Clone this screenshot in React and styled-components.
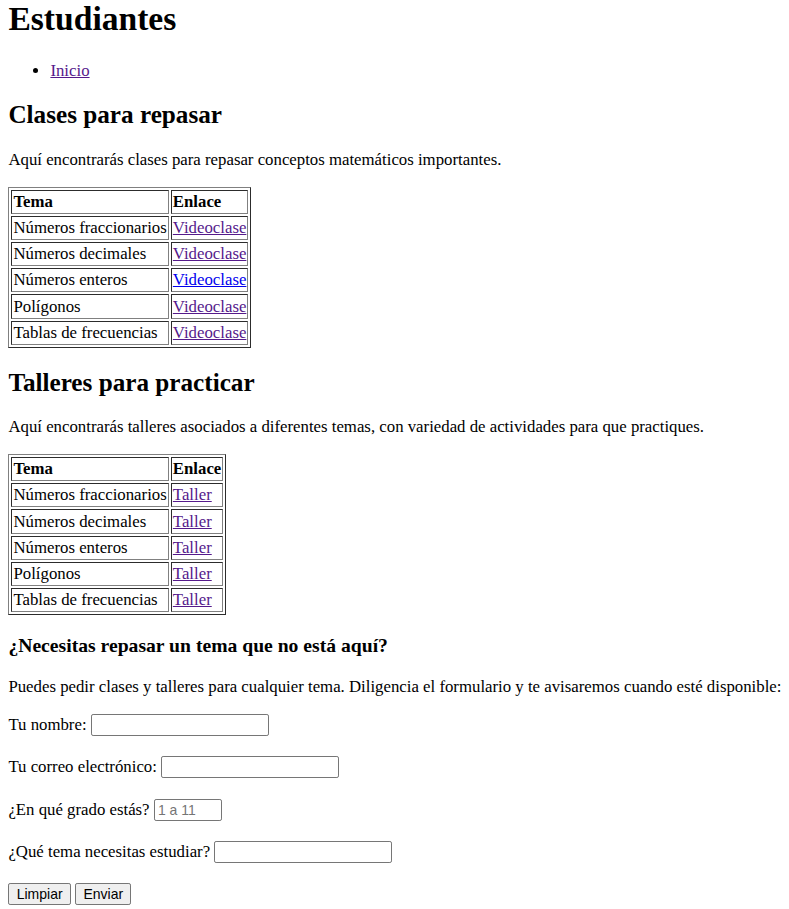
import React from 'react';
import styled, { createGlobalStyle } from 'styled-components';

// the reference page was captured at a 105% zoom level
const GlobalStyle = createGlobalStyle`
  html {
    zoom: 1.05;
  }
  body {
    margin: 0 8px 8px;
    font-family: "Liberation Serif", "Times New Roman", serif;
    font-size: 16px;
    color: #000;
    background: #fff;
  }
`;

const Title = styled.h1`
  font-size: 32px;
  font-weight: bold;
  margin: 0 0 21.44px;
`;

const Nav = styled.ul`
  margin: 16px 0;
  padding-left: 40px;
`;

const SectionTitle = styled.h2`
  font-size: 24px;
  font-weight: bold;
  margin: 19.92px 0;
`;

const SubTitle = styled.h3`
  font-size: 18.72px;
  font-weight: bold;
  margin: 18.72px 0;
`;

const Text = styled.p`
  margin: 16px 0;
  white-space: ${({ $nowrap }) => ($nowrap ? 'nowrap' : 'normal')};
`;

const Link = styled.a`
  color: ${({ $visited }) => ($visited ? '#551a8b' : '#0000ee')};
  text-decoration: underline;
  cursor: pointer;
`;

const Table = styled.table`
  border: 1px outset #808080;
  border-spacing: 2px;
  border-collapse: separate;
`;

const HeadCell = styled.th`
  border: 1px inset #808080;
  padding: 1px;
  text-align: left;
  font-weight: bold;
`;

const Cell = styled.td`
  border: 1px inset #808080;
  padding: 1px;
`;

const Form = styled.form`
  margin: 0;
`;

const Field = styled.p`
  margin: 16px 0;
  min-height: 24.3px;
`;

const Input = styled.input`
  box-sizing: border-box;
  font-family: "Liberation Sans", Arial, sans-serif;
  font-size: 13.33px;
  height: 21px;
  padding: 2px 3px;
  border: 1px solid #767676;
  border-radius: 2px;
  width: ${({ $w }) => $w || '169.5px'};
  &::placeholder {
    color: #757575;
  }
`;

const Button = styled.button`
  box-sizing: border-box;
  font-family: "Liberation Sans", Arial, sans-serif;
  font-size: 13.33px;
  height: 21.3px;
  padding: 2px 7px;
  border: 1px solid #767676;
  border-radius: 2px;
  background: #efefef;
  color: #000;
`;

const temas = [
  ['Números fraccionarios', true],
  ['Números decimales', true],
  ['Números enteros', false],
  ['Polígonos', true],
  ['Tablas de frecuencias', true],
];

function TopicTable({ label, allVisited }) {
  return (
    <Table>
      <tbody>
        <tr>
          <HeadCell>Tema</HeadCell>
          <HeadCell>Enlace</HeadCell>
        </tr>
        {temas.map(([tema, visited]) => (
          <tr key={tema}>
            <Cell>{tema}</Cell>
            <Cell>
              <Link $visited={allVisited || visited}>{label}</Link>
            </Cell>
          </tr>
        ))}
      </tbody>
    </Table>
  );
}

export default function App() {
  return (
    <>
      <GlobalStyle />
      <Title>Estudiantes</Title>
      <Nav>
        <li>
          <Link $visited>Inicio</Link>
        </li>
      </Nav>
      <SectionTitle>Clases para repasar</SectionTitle>
      <Text>Aquí encontrarás clases para repasar conceptos matemáticos importantes.</Text>
      <TopicTable label="Videoclase" />
      <SectionTitle>Talleres para practicar</SectionTitle>
      <Text>
        Aquí encontrarás talleres asociados a diferentes temas, con variedad de actividades para que
        practiques.
      </Text>
      <TopicTable label="Taller" allVisited />
      <SubTitle>¿Necesitas repasar un tema que no está aquí?</SubTitle>
      <Text $nowrap>
        Puedes pedir clases y talleres para cualquier tema. Diligencia el formulario y te avisaremos
        cuando esté disponible:
      </Text>
      <Form onSubmit={(e) => e.preventDefault()}>
        <Field>
          Tu nombre: <Input type="text" />
        </Field>
        <Field>
          Tu correo electrónico: <Input type="email" />
        </Field>
        <Field>
          ¿En qué grado estás? <Input type="number" placeholder="1 a 11" $w="65px" />
        </Field>
        <Field>
          ¿Qué tema necesitas estudiar? <Input type="text" />
        </Field>
        <Field>
          <Button type="reset">Limpiar</Button> <Button type="submit">Enviar</Button>
        </Field>
      </Form>
    </>
  );
}
